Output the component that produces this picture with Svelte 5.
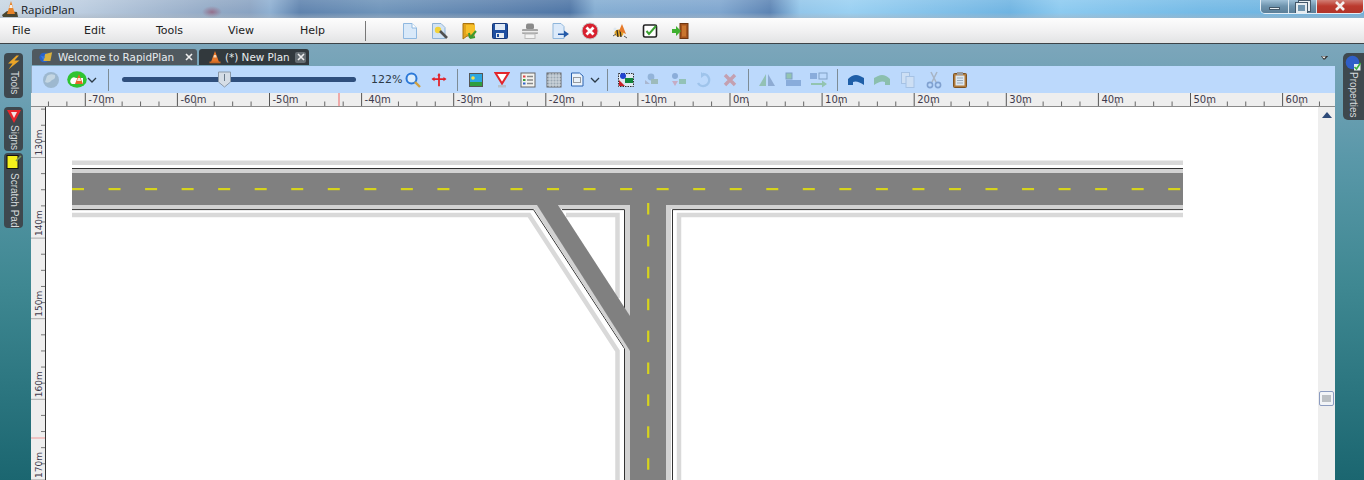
<script>
  const menus = ['File', 'Edit', 'Tools', 'View', 'Help'];

  // ruler ticks, 92.1px per 10m horizontally, 80.6px vertically
  const hTicks = [];
  for (let i = -3; i < 70; i++) {
    const x = 85.3 + i * 18.42 - 31;
    const major = (i + 100) % 5 === 0;
    hTicks.push({ x, major, label: major ? (i / 5) * 10 - 70 : null });
  }
  const vTicks = [];
  for (let i = -4; i < 24; i++) {
    const y = 157.5 + i * 16.12 - 107;
    const major = (i + 100) % 5 === 0;
    vTicks.push({ y, major, label: major ? 130 + (i / 5) * 10 : null });
  }

  const hDashes = Array.from({ length: 31 }, (_, i) => 72 + i * 36.54);
  const vDashes = Array.from({ length: 9 }, (_, i) => 203 + i * 31.9);
</script>

<div class="window">
  <header class="titlebar">
    <svg class="app-icon" width="18" height="18" viewBox="0 0 18 18">
      <path d="M1 15 L6 11 L16 12 L17 17 L2 17 Z" fill="#4a4630" />
      <path d="M10 1 L14 14 L6 14 Z" fill="#e8842a" />
      <path d="M9 5 L11 5 L11.8 8 L8.2 8 Z" fill="#f6efe6" />
    </svg>
    <span class="app-name">RapidPlan</span>
    <div class="win-buttons">
      <div class="win-btn min"><i></i></div>
      <div class="win-btn max"><i></i><b></b></div>
      <div class="win-btn close">
        <svg width="14" height="10" viewBox="0 0 14 10"><path d="M3 1 L11 9 M11 1 L3 9" stroke="#f4f0ee" stroke-width="2.6" /></svg>
      </div>
    </div>
  </header>

  <nav class="menubar">
    {#each menus as m}
      <span class="menu-item">{m}</span>
    {/each}
    <span class="menu-sep"></span>
    <div class="main-icons">
      <span class="mi"><svg class="ic" width="18" height="18" viewBox="0 0 18 18"><path d="M2.5 1.5 H11 L15.5 6 V16.5 H2.5 Z" fill="#d9e9f9" stroke="#8fb8e0" /><path d="M11 1.5 V6 H15.5" fill="#fff" stroke="#8fb8e0" /></svg></span>
      <span class="mi"><svg class="ic" width="18" height="18" viewBox="0 0 18 18"><path d="M1.5 1.5 H10 L14 5.5 V16.5 H1.5 Z" fill="#d2e3f4" stroke="#8fb2d4" /><circle cx="7" cy="8" r="3.2" fill="#f2d23a" /><path d="M9 9 L16 16" stroke="#505050" stroke-width="2.6" /></svg></span>
      <span class="mi"><svg class="ic" width="18" height="18" viewBox="0 0 18 18"><path d="M2 1.5 H13 V14 H6 L2 17 Z" fill="#e3a41c" stroke="#a87410" /><path d="M5 3 H14 V12 H5 Z" fill="#f7c02a" /><path d="M9 16 L15 9 M9 16 L8 11 M9 16 L14 15" stroke="#3d9a2f" stroke-width="2" fill="none" /></svg></span>
      <span class="mi"><svg class="ic" width="18" height="18" viewBox="0 0 18 18"><rect x="1.5" y="1.5" width="15" height="15" rx="1" fill="#1f4fa0" stroke="#17397a" /><rect x="4" y="2" width="10" height="6" fill="#dfe9f6" /><rect x="5" y="11" width="8" height="5" fill="#e8edf2" /><rect x="6" y="12" width="2" height="3" fill="#1f4fa0" /></svg></span>
      <span class="mi"><svg class="ic" width="18" height="18" viewBox="0 0 18 18"><rect x="5" y="1.5" width="8" height="6" rx="2" fill="#8a8a8a" /><rect x="1" y="7" width="16" height="5" rx="1" fill="#a5a5a5" /><rect x="1" y="9" width="16" height="1.4" fill="#ececec" /><rect x="4" y="12" width="10" height="4.5" fill="#f3f3f3" stroke="#bbb" /></svg></span>
      <span class="mi"><svg class="ic" width="18" height="18" viewBox="0 0 18 18"><path d="M2 1.5 H10 L13 4.5 V16.5 H2 Z" fill="#dceafa" stroke="#8fb6db" /><path d="M7 11.5 H13 V8.5 L18 12 L13 15.5 V13 H7 Z" fill="#245aa8" /></svg></span>
      <span class="mi"><svg class="ic" width="18" height="18" viewBox="0 0 18 18"><circle cx="9" cy="9" r="8" fill="#d8212f" stroke="#c5c5c5" /><path d="M5.5 5.5 L12.5 12.5 M12.5 5.5 L5.5 12.5" stroke="#fff" stroke-width="2.8" /></svg></span>
      <span class="mi"><svg class="ic" width="18" height="18" viewBox="0 0 18 18"><ellipse cx="8" cy="11" rx="4.5" ry="3.5" fill="#e6a92b" /><path d="M6 8 L7 15 M9 8 L10 15" stroke="#3a2f1c" stroke-width="1.4" /><path d="M11 2 L15 12 L8 9 Z" fill="#e67a2a" /><path d="M2 14 L5 12 M13 14 L16 16" stroke="#555" /><circle cx="4" cy="7" r="1.6" fill="#dfe8ef" /></svg></span>
      <span class="mi"><svg class="ic" width="18" height="18" viewBox="0 0 18 18"><rect x="2.5" y="3" width="13" height="12" rx="1.5" fill="#fff" stroke="#222" stroke-width="1.6" /><path d="M5.5 9 L8 12 L15 4" fill="none" stroke="#3aa030" stroke-width="2" /></svg></span>
      <span class="mi"><svg class="ic" width="18" height="18" viewBox="0 0 18 18"><rect x="9" y="1.5" width="8" height="15" fill="#a5541d" stroke="#6e3610" /><rect x="11" y="3.5" width="4" height="11" fill="#c9752e" /><path d="M1 7 H5 V4 L10 9 L5 14 V11 H1 Z" fill="#3fb02f" /></svg></span>
    </div>
  </nav>

  <div class="workspace">
    <aside class="rail left">
      <div class="rail-tab tools">
        <svg class="ic" width="15" height="15" viewBox="0 0 15 15"><path d="M10.5 .5 L2 8.5 H6.5 L2.5 14.5 L13.5 5.5 H8.5 L13 .5 Z" fill="#eaa528" /></svg>
        <span class="vtext">Tools</span>
      </div>
      <div class="rail-tab signs">
        <svg class="ic" width="16" height="15" viewBox="0 0 16 14"><path d="M1 .5 H15 L8 13.5 Z" fill="#e8262c" /><path d="M5 2.5 H11 L8 8.5 Z" fill="#f3e4e2" /></svg>
        <span class="vtext">Signs</span>
      </div>
      <div class="rail-tab scratch">
        <svg width="17" height="16" viewBox="0 0 17 16"><rect x="2" y="1.5" width="11" height="13" fill="#f4f01c" stroke="#111" /><path d="M11 7 L16 2" stroke="#7a9a5a" stroke-width="1.6" /></svg>
        <span class="vtext">Scratch Pad</span>
      </div>
    </aside>

    <main class="center">
      <div class="tabs">
        <div class="tab welcome">
          <svg class="ic" width="14" height="13" viewBox="0 0 16 14"><circle cx="6" cy="7" r="5.5" fill="#2a62c8" /><path d="M7 3 L15 1 L13 11 L5 11 Z" fill="#d9b13e" /><path d="M2 5 L7 6 L5 10 Z" fill="#3a7ae0" /></svg>
          <span class="tab-label">Welcome to RapidPlan</span>
          <span class="tab-close"><svg width="8" height="8" viewBox="0 0 8 8"><path d="M1 1 L7 7 M7 1 L1 7" stroke="#eee" stroke-width="1.6" /></svg></span>
        </div>
        <div class="tab plan">
          <svg class="ic" width="14" height="14" viewBox="0 0 14 14"><path d="M7 1 L11 12 H3 Z" fill="#e8772a" /><rect x="1.5" y="11.5" width="11" height="1.8" fill="#c86a26" /><path d="M6 5 H8 L8.6 7.4 H5.4 Z" fill="#f4d6b6" /></svg>
          <span class="tab-label">(*) New Plan</span>
          <span class="tab-close"><svg width="8" height="8" viewBox="0 0 8 8"><path d="M1 1 L7 7 M7 1 L1 7" stroke="#eee" stroke-width="1.6" /></svg></span>
        </div>
        <svg class="tab-menu" width="8" height="6" viewBox="0 0 10 6"><path d="M0 .5 H9 L5 5 H3 Z" fill="#333" /><path d="M1 1.2 H6 L4 3.5 Z" fill="#fff" /></svg>
      </div>

      <div class="toolbar">
        <span class="ti"><svg class="ic" width="18" height="18" viewBox="0 0 18 18"><circle cx="9" cy="9" r="8" fill="#9db8cf" /><path d="M5 5 Q8 2 13 4 Q14 8 10 9 Q7 13 3 11 Z" fill="#c4d6e2" /></svg></span>
        <span class="ti cone"><svg class="ic" width="20" height="17" viewBox="0 0 20 17"><ellipse cx="10" cy="8.5" rx="9.8" ry="8.2" fill="#2ec431" /><path d="M4 8 Q6 5 9 7 H16 V13 H5 Q2 11 4 8 Z" fill="#fff" /><path d="M12 3 L16 13 H8 Z" fill="#e8652a" /><path d="M11 7 H13 L14 10 H10 Z" fill="#f6e6da" /></svg></span>
        <span class="chev first"><svg width="10" height="6" viewBox="0 0 10 6"><path d="M1 1 L5 5 L9 1" fill="none" stroke="#2b3a48" stroke-width="1.3" /></svg></span>
        <span class="sep s1"></span>
        <div class="slider"><span class="track"></span>
          <svg class="thumb" width="13" height="17" viewBox="0 0 13 17"><path d="M.5 1 H12.5 V11 L6.5 16 L.5 11 Z" fill="#d5dde6" stroke="#8b99a8" /><path d="M6.5 3 V10" stroke="#6a7a8a" /></svg>
        </div>
        <span class="zoom-val">122%</span>
        <span class="ti"><svg class="ic" width="18" height="18" viewBox="0 0 18 18"><circle cx="7.5" cy="7.5" r="5" fill="#dcecfa" stroke="#2a78d8" stroke-width="2" /><path d="M11 11 L16 16" stroke="#d0a040" stroke-width="2.4" /></svg></span>
        <span class="ti"><svg class="ic" width="16" height="16" viewBox="0 0 18 18"><path d="M9 3 V16 M2 8 H16" stroke="#e2222a" stroke-width="2" /><path d="M.5 8 L4 5.5 V10.5 Z M17.5 8 L14 5.5 V10.5 Z M9 1 L7 4 H11 Z" fill="#e2222a" /></svg></span>
        <span class="sep m5"></span>
        <span class="ti m5"><svg class="ic" width="16" height="16" viewBox="0 0 16 16"><rect x="1.5" y="1.5" width="13" height="13" fill="#2da7e0" stroke="#555" /><rect x="2" y="10" width="12" height="4" fill="#2f9e3f" /><circle cx="5" cy="6" r="1.8" fill="#f6e24a" /></svg></span>
        <span class="ti"><svg class="ic" width="16" height="18" viewBox="0 0 16 18"><path d="M1.5 2 H14.5 L8 12.5 Z" fill="#fff" stroke="#e2262c" stroke-width="2" /><rect x="4" y="14" width="8" height="2.5" fill="#b5c2ce" /></svg></span>
        <span class="ti"><svg class="ic" width="16" height="16" viewBox="0 0 16 16"><rect x="1" y="1" width="14" height="14" fill="#f3f3ef" stroke="#666" /><rect x="3" y="3.5" width="2.5" height="2" fill="#d44" /><rect x="3" y="7" width="2.5" height="2" fill="#3a9a3a" /><rect x="3" y="10.5" width="2.5" height="2" fill="#36c" /><path d="M7 4.5 H13 M7 8 H13 M7 11.5 H13" stroke="#888" stroke-width="1.4" /></svg></span>
        <span class="ti"><svg class="ic" width="16" height="16" viewBox="0 0 16 16"><rect x="1" y="1" width="14" height="14" fill="#9aa8b4" stroke="#666" /><path d="M4 1 V15 M7 1 V15 M10 1 V15 M13 1 V15 M1 4 H15 M1 7 H15 M1 10 H15 M1 13 H15" stroke="#dde3e8" stroke-width=".8" /></svg></span>
        <span class="ti narrow"><svg class="ic" width="14" height="15" viewBox="0 0 14 15"><path d="M1.5 1 H9.5 L13 4 V14 H1.5 Z" fill="#eaf2fa" stroke="#2a62b0" /><rect x="3.5" y="5.5" width="7" height="5" fill="none" stroke="#444" stroke-dasharray="1 1" /></svg></span>
        <span class="chev second"><svg width="10" height="6" viewBox="0 0 10 6"><path d="M1 1 L5 5 L9 1" fill="none" stroke="#2b3a48" stroke-width="1.3" /></svg></span>
        <span class="sep m4"></span>
        <span class="ti m5"><svg class="ic" width="18" height="18" viewBox="0 0 18 18"><rect x="1.5" y="2.5" width="15" height="13" fill="#dfe8f2" stroke="#333" stroke-dasharray="1.5 1" /><circle cx="6" cy="5" r="3" fill="#1f44d0" /><rect x="8" y="7" width="8" height="5" fill="#12853a" /><path d="M2 9 L8 15 H2 Z" fill="#c8222a" /></svg></span>
        <span class="ti dim"><svg width="18" height="18" viewBox="0 0 18 18"><circle cx="8" cy="6" r="3.4" fill="#8fb0d6" /><rect x="8" y="8" width="7" height="5" fill="#9ab8b4" /><path d="M2 9 L7 13 H2 Z" fill="#a8b4cc" /></svg></span>
        <span class="ti dim"><svg width="18" height="18" viewBox="0 0 18 18"><circle cx="6" cy="5" r="3" fill="#86a9d6" /><rect x="10" y="8" width="7" height="5" fill="#8fc0b0" /><path d="M3 10 H9 L6 15 Z" fill="#c8a8c0" /></svg></span>
        <span class="ti dim"><svg width="18" height="18" viewBox="0 0 18 18"><path d="M8 3 A6 6 0 1 1 3 12" fill="none" stroke="#9cc2ea" stroke-width="2.4" /><path d="M6 1 L10 4 L6 7 Z" fill="#9cc2ea" /></svg></span>
        <span class="ti dim"><svg width="16" height="16" viewBox="0 0 16 16"><path d="M3 3 L13 13 M13 3 L3 13" stroke="#c59aa8" stroke-width="3.4" /></svg></span>
        <span class="sep m5"></span>
        <span class="ti m5 dim"><svg width="18" height="18" viewBox="0 0 18 18"><path d="M1 15 L8 3 V15 Z" fill="#8fbfae" /><path d="M10 3 L17 15 H10 Z" fill="#8aa7cf" /></svg></span>
        <span class="ti dim"><svg width="18" height="18" viewBox="0 0 18 18"><rect x="2" y="2" width="6" height="6" fill="#8fc2a8" stroke="#7a9cc0" /><rect x="2" y="9" width="15" height="6" fill="#84a8d8" /></svg></span>
        <span class="ti dim"><svg width="20" height="18" viewBox="0 0 20 18"><rect x="1" y="2" width="7" height="6" fill="#84a8d8" /><rect x="10" y="2" width="8" height="6" fill="none" stroke="#7a9cc0" /><path d="M2 12 H13 V9.5 L18 13 L13 16.5 V14 H2 Z" fill="#8fc2a8" /></svg></span>
        <span class="sep m5"></span>
        <span class="ti m5"><svg class="ic" width="18" height="16" viewBox="0 0 18 16"><path d="M1 13 V7 Q7 1 13 4 L17 6 V13 Q10 8 6 10 V13 Z" fill="#1f5fa8" /></svg></span>
        <span class="ti dim"><svg width="18" height="16" viewBox="0 0 18 16"><path d="M17 13 V7 Q11 1 5 4 L1 6 V13 Q8 8 12 10 V13 Z" fill="#86bda6" /></svg></span>
        <span class="ti dim"><svg width="16" height="18" viewBox="0 0 16 18"><rect x="1.5" y="1.5" width="8" height="11" fill="#cfe0f4" stroke="#a4c0e2" /><rect x="6" y="5.5" width="8" height="11" fill="#cfe0f4" stroke="#a4c0e2" /></svg></span>
        <span class="ti dim"><svg width="18" height="18" viewBox="0 0 18 18"><path d="M6 1 L11 11 M12 1 L7 11" stroke="#a6b2c0" stroke-width="1.6" /><circle cx="5" cy="14" r="2.6" fill="none" stroke="#7a9ccc" stroke-width="1.6" /><circle cx="13" cy="14" r="2.6" fill="none" stroke="#7a9ccc" stroke-width="1.6" /></svg></span>
        <span class="ti"><svg class="ic" width="16" height="18" viewBox="0 0 16 18"><rect x="1.5" y="2.5" width="13" height="14" rx="1" fill="#b07a3a" stroke="#7c5222" /><rect x="3.5" y="4.5" width="9" height="10" fill="#dde8f0" /><rect x="5" y="1" width="6" height="3" fill="#999" /><path d="M5 7 H11 M5 9.5 H11 M5 12 H11" stroke="#9ab" /></svg></span>
      </div>

      <div class="hruler">
        <svg width="1304" height="13" viewBox="0 0 1304 13">
          {#each hTicks as t}
            {#if t.major}
              <line x1={t.x} x2={t.x} y1="0" y2="13" stroke="#555" />
              <text x={t.x + 3} y="10">{t.label}m</text>
            {:else}
              <line x1={t.x} x2={t.x} y1="8.5" y2="13" stroke="#666" />
            {/if}
          {/each}
          <line x1="308" x2="308" y1="0" y2="13" stroke="#e66" />
        </svg>
      </div>

      <div class="body-row">
        <div class="vruler">
          <svg width="15" height="373" viewBox="0 0 15 373">
            {#each vTicks as t}
              {#if t.major}
                <line x1="0" x2="14" y1={t.y} y2={t.y} stroke="#aaa" />
                <text class="vlabel" transform="translate(11 {t.y - 2}) rotate(-90)">{t.label}m</text>
              {:else}
                <line x1="10" x2="14" y1={t.y} y2={t.y} stroke="#777" />
              {/if}
            {/each}
            <line x1="0" x2="14" y1="331" y2="331" stroke="#f09a9a" />
          </svg>
        </div>

        <div class="canvas">
          <svg width="1272" height="373" viewBox="46 107 1272 373">
            <!-- outer verge -->
            <g fill="none" stroke="#d9d9d9" stroke-width="4.5">
              <path d="M72 162.7 H1183" />
              <path d="M72 215 H529 L617.5 351 V480" />
              <path d="M566 215 H617.5 V298" />
              <path d="M1183 215 H679 V480" />
            </g>
            <!-- edge lines -->
            <g fill="none" stroke="#333" stroke-width="1">
              <path d="M72 168.5 H1183" />
              <path d="M72 209.6 H533.5 L624.5 348.5 V480" />
              <path d="M562 209.6 H624.5 V308" />
              <path d="M1183 209.6 H672.5 V480" />
            </g>
            <!-- shoulder -->
            <g fill="#d2d2d2">
              <rect x="72" y="169" width="1111" height="4" />
              <polygon points="72,205 538,205 630,350 630,480 625,480 625,348.5 534,209 72,209" />
              <polygon points="558,205 630,205 630,317 625,309 625,209 561,209" />
              <polygon points="666,205 1183,205 1183,209 671,209 671,480 666,480" />
            </g>
            <!-- asphalt -->
            <g fill="#808080">
              <rect x="72" y="173" width="1111" height="32" />
              <rect x="630" y="205" width="36" height="275" />
              <polygon points="537,205 558,205 630,316 630,351" />
            </g>
            <g fill="#d6d31c">
              {#each hDashes as x}
                <rect {x} y="188" width="12" height="2.2" />
              {/each}
              {#each vDashes as y}
                <rect x="647.1" {y} width="2.2" height="11.5" />
              {/each}
            </g>
          </svg>
        </div>

        <div class="scrollbar">
          <svg class="arrow" width="10" height="6" viewBox="0 0 10 6"><path d="M5 0 L10 6 H0 Z" fill="#2d4a78" /></svg>
          <span class="scroll-thumb"><i></i></span>
        </div>
      </div>
    </main>

    <aside class="rail right">
      <div class="rail-tab props">
        <svg class="ic" width="16" height="16" viewBox="0 0 16 16"><circle cx="7.5" cy="7.5" r="6.8" fill="#2f5fc8" /><rect x="9" y="9" width="6.5" height="6.5" fill="#e6eef0" /><path d="M9.5 12 L11.5 14 L15.5 8" fill="none" stroke="#3ab03a" stroke-width="1.6" /></svg>
        <span class="vtext">Properties</span>
      </div>
    </aside>
  </div>
</div>

<style>
  :global(body) {
    margin: 0;
    overflow: hidden;
  }

  .window {
    width: 1364px;
    height: 480px;
    display: flex;
    flex-direction: column;
    font-family: "DejaVu Sans", sans-serif;
    font-size: 11px;
    overflow: hidden;
  }

  .ic {
    filter: blur(0.3px);
    flex: none;
  }

  /* title bar */
  .titlebar {
    height: 18px;
    flex: none;
    display: flex;
    align-items: center;
    position: relative;
    background:
      linear-gradient(180deg, rgba(255, 255, 255, 0.12), rgba(255, 255, 255, 0) 70%, rgba(170, 180, 190, 0.5) 100%),
      radial-gradient(ellipse 10px 6px at 212px 12px, #94708c, transparent),
      linear-gradient(90deg, #c9d7e4 0, #bccde0 80px, #93aac6 210px, #8aa3c2 250px, #8fb0d2 270px, #5f83ae 300px, #6e94ba 380px, #5d82ae 500px, #4f76a6 570px, #84add2 595px, #7fa6cf 720px, #5c84b4 770px, #93c6ea 800px, #99d0f2 850px, #6fb4e2 1010px, #8ccaf0 1060px, #74bae6 1200px, #6cb0dc 1364px);
  }

  .app-icon {
    margin-left: 1px;
  }

  .app-name {
    margin-left: 2px;
    font-family: "Open Sans", sans-serif;
    font-size: 11.5px;
    color: #15191d;
  }

  .win-buttons {
    position: absolute;
    right: 0;
    top: -1px;
    display: flex;
    height: 15px;
    width: 104px;
    border: 1px solid #e4eef6;
    border-top: 0;
    border-radius: 0 0 5px 5px;
    box-sizing: border-box;
    overflow: hidden;
  }

  .win-btn {
    position: relative;
    display: flex;
    align-items: center;
    justify-content: center;
    background: linear-gradient(180deg, #a8c8de, #6f94ae 50%, #5c7f98);
    border-right: 1px solid #dce8f0;
    width: 27px;
    flex: none;
  }

  .win-btn.close {
    flex: 1;
    border: 0;
    background: linear-gradient(180deg, #d58a80, #bb3a2e 50%, #b2352a);
  }

  .win-btn.min i {
    display: block;
    width: 11px;
    height: 3px;
    margin-top: 5px;
    background: #e6ecf0;
    border: 1px solid #44586a;
    box-sizing: border-box;
  }

  .win-btn.max i,
  .win-btn.max b {
    position: absolute;
    width: 7px;
    height: 6px;
    border: 2px solid #e6ecf0;
    outline: 1px solid #44586a;
  }

  .win-btn.max i {
    left: 10px;
    top: 2px;
  }

  .win-btn.max b {
    left: 7px;
    top: 4px;
    background: #6f94ae;
  }

  /* menu */
  .menubar {
    height: 26px;
    flex: none;
    display: flex;
    align-items: center;
    padding-left: 12px;
    box-sizing: border-box;
    background: linear-gradient(180deg, #fdfdfd, #f0f0f1 55%, #e2e3e4);
    border-bottom: 1px solid #3d4347;
    color: #222;
  }

  .menu-item {
    width: 72px;
    flex: none;
    font-size: 11px;
  }

  .menu-item:nth-child(5) {
    width: 65px;
  }

  .menu-sep {
    width: 1px;
    height: 20px;
    background: #777;
    flex: none;
  }

  .main-icons {
    display: flex;
    margin-left: 29px;
  }

  .mi {
    width: 30px;
    height: 20px;
    display: flex;
    align-items: center;
    justify-content: center;
  }

  /* workspace */
  .workspace {
    flex: 1;
    display: flex;
    min-height: 0;
    background: linear-gradient(180deg, #7ca6bb 0, #5a98a9 26%, #3f8892 55%, #1b6670 100%);
  }

  .rail {
    flex: none;
    display: flex;
    flex-direction: column;
  }

  .rail.left {
    width: 31px;
    padding-left: 4px;
    padding-top: 9px;
    box-sizing: border-box;
  }

  .rail.right {
    width: 29px;
    padding-left: 8px;
    padding-top: 9px;
    box-sizing: border-box;
  }

  .rail-tab {
    background: #3e484e;
    color: #d6dadc;
    display: flex;
    flex-direction: column;
    align-items: center;
    border-radius: 4px;
    width: 19px;
    padding-top: 2px;
    box-sizing: border-box;
    overflow: hidden;
  }

  .vtext {
    writing-mode: vertical-rl;
    font-family: "Liberation Sans", sans-serif;
    font-size: 10px;
    line-height: 16px;
    white-space: nowrap;
    margin-top: 1px;
  }

  .tools {
    height: 45px;
  }

  .signs {
    height: 44px;
    margin-top: 9px;
  }

  .scratch {
    height: 75px;
    margin-top: 2px;
    padding-top: 1px;
  }

  .scratch .vtext {
    margin-top: 3px;
  }

  .props {
    width: 21px;
    height: 67px;
    border-radius: 5px 0 0 5px;
    align-items: flex-start;
    padding-left: 2px;
  }

  .center {
    flex: 1;
    min-width: 0;
    display: flex;
    flex-direction: column;
  }

  /* tabs */
  .tabs {
    height: 22px;
    flex: none;
    display: flex;
    align-items: flex-end;
    padding-left: 1px;
    gap: 2px;
    padding-bottom: 1px;
    box-sizing: border-box;
    position: relative;
  }

  .tab {
    height: 16px;
    display: flex;
    align-items: center;
    color: #e8ecef;
    border-radius: 3px 3px 0 0;
    box-sizing: border-box;
    padding-left: 7px;
    gap: 5px;
  }

  .tab-label {
    font-size: 10.4px;
    white-space: nowrap;
  }

  .welcome {
    width: 165px;
    background: #50595f;
  }

  .plan {
    width: 110px;
    background: #32393d;
    padding-left: 9px;
    gap: 3px;
  }

  .tab-close {
    width: 11px;
    height: 11px;
    display: flex;
    align-items: center;
    justify-content: center;
    background: #666e73;
    border-radius: 2px;
    margin-left: auto;
    margin-right: 3px;
  }

  .welcome .tab-close {
    background: transparent;
  }

  .tab-menu {
    position: absolute;
    right: 6px;
    bottom: 5px;
  }

  /* toolbar */
  .toolbar {
    height: 27px;
    flex: none;
    display: flex;
    align-items: center;
    background: #bcd9fc;
    padding-left: 6px;
    box-sizing: border-box;
    border-left: 1px solid #8fa8bc;
  }

  .ti {
    width: 26px;
    height: 20px;
    flex: none;
    display: flex;
    align-items: center;
    justify-content: center;
  }

  .ti.narrow {
    width: 20px;
  }

  .ti.m5 {
    margin-left: 5px;
  }

  .dim {
    opacity: 0.9;
    filter: blur(0.4px);
  }

  .chev {
    display: flex;
    align-items: center;
    justify-content: center;
    flex: none;
  }

  .chev.first {
    width: 10px;
    margin-left: -3px;
  }

  .chev.second {
    width: 16px;
  }

  .sep {
    width: 1px;
    height: 22px;
    background: #7d8c96;
    flex: none;
  }

  .sep.s1 {
    margin-left: 11px;
  }

  .sep.m5 {
    margin-left: 5px;
  }

  .sep.m4 {
    margin-left: 4px;
  }

  .slider {
    position: relative;
    width: 234px;
    height: 17px;
    flex: none;
    margin-left: 13px;
    display: flex;
    align-items: center;
  }

  .track {
    display: block;
    width: 100%;
    height: 5px;
    border-radius: 3px;
    background: #2f4f7d;
  }

  .thumb {
    position: absolute;
    left: 96px;
    top: 0;
  }

  .zoom-val {
    width: 29px;
    margin-left: 15px;
    flex: none;
    font-size: 11px;
    color: #2c3a46;
    white-space: nowrap;
  }

  /* rulers */
  .hruler {
    height: 13px;
    flex: none;
    background: #eeeeee;
    border-bottom: 1px solid #8a8a8a;
    overflow: hidden;
  }

  .hruler svg {
    display: block;
  }

  svg text {
    font-family: "DejaVu Sans", sans-serif;
    font-size: 10px;
    fill: #3e3a4c;
  }

  svg text.vlabel {
    font-size: 9px;
  }

  .body-row {
    flex: 1;
    min-height: 0;
    display: flex;
  }

  .vruler {
    width: 14px;
    flex: none;
    background: #eeeeee;
    border-right: 1px solid #333;
    overflow: hidden;
  }

  .vruler svg,
  .canvas svg {
    display: block;
  }

  .canvas {
    width: 1272px;
    flex: none;
    background: #fff;
    overflow: hidden;
  }

  .canvas svg {
    filter: blur(0.35px);
  }

  .scrollbar {
    flex: 1;
    position: relative;
    background: #eeeeee;
    display: flex;
    justify-content: center;
    padding-top: 5px;
    box-sizing: border-box;
    align-items: flex-start;
  }

  .scroll-thumb {
    position: absolute;
    left: 1px;
    top: 284px;
    width: 15px;
    height: 15px;
    box-sizing: border-box;
    border: 1px solid #8c9cc0;
    border-radius: 2px;
    background: #f2f4f7;
    display: flex;
    align-items: center;
    justify-content: center;
  }

  .scroll-thumb i {
    display: block;
    width: 9px;
    height: 7px;
    background: #bcc0c4;
  }
</style>
